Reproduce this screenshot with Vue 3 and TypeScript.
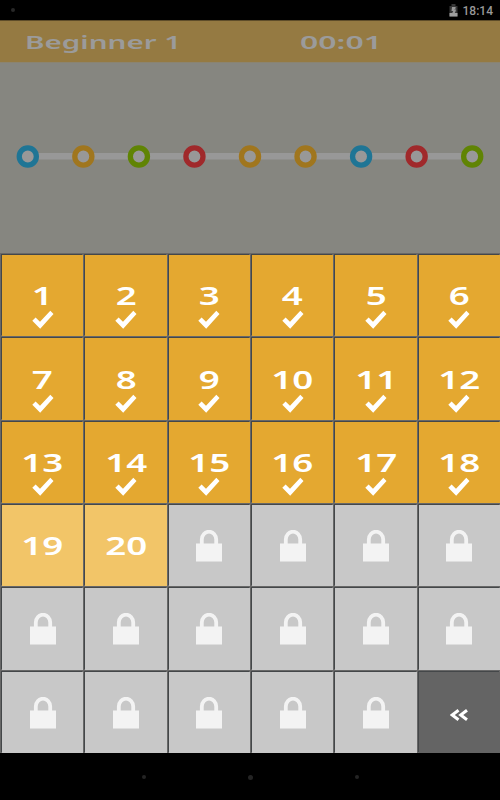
<script setup lang="ts">
type State = 'done' | 'open' | 'locked' | 'back'
interface Cell { id: number; state: State }

const cells: Cell[] = Array.from({ length: 36 }, (_, i) => {
  const id = i + 1
  const state: State = id <= 18 ? 'done' : id <= 20 ? 'open' : id < 36 ? 'locked' : 'back'
  return { id, state }
})

const nodes: string[] = ['blue', 'amber', 'green', 'red', 'amber', 'amber', 'blue', 'red', 'green']
</script>

<template>
  <div class="screen">
    <div class="status">
      <span class="dot"></span>
      <div class="status-right">
        <svg class="battery" width="9" height="13" viewBox="0 0 9 13">
          <path d="M2.500 0h4v2h2v10.500H0.500V2h2z" fill="#363636" />
          <path d="M0.500 9h8v3.500h-8z" fill="#a0a0a0" />
          <path d="M3 3h3.600v1.500L5.200 5.500h1.800L6.500 7.500 5.500 9.500H3L4.200 7H2.500z" fill="#999" />
        </svg>
        <span class="clock">18:14</span>
      </div>
    </div>
    <header class="bar">
      <span class="title">Beginner 1</span>
      <span class="time">00:01</span>
    </header>
    <section class="stage">
      <svg width="500" height="28" viewBox="0 0 500 28">
        <rect x="28" y="10" width="444" height="6.500" fill="#989898" />
        <circle v-for="(n, i) in nodes" :key="i" :class="n" :cx="27.800 + i * 55.550" cy="13.500" r="8.550" />
      </svg>
    </section>
    <main class="grid">
      <div v-for="c in cells" :key="c.id" class="cell" :class="c.state">
        <template v-if="c.state === 'done'">
          <span class="num">{{ c.id }}</span>
          <svg class="check" width="22" height="20" viewBox="0 0 22 20">
            <path d="M0.300 10.800 3.600 7.400 8 11.800 18.300 0.800 21.500 4 8.200 18.700z" fill="#fff" />
          </svg>
        </template>
        <span v-else-if="c.state === 'open'" class="num">{{ c.id }}</span>
        <svg v-else-if="c.state === 'locked'" width="26" height="32" viewBox="0 0 26 32">
          <path d="M5.800 15V9.500a7.200 7.800 0 0 1 14.400 0V15" fill="none" stroke="#f3f3f3" stroke-width="3.800" />
          <rect y="13.500" width="26" height="18" fill="#f3f3f3" />
        </svg>
        <svg v-else width="18" height="12" viewBox="0 0 18 12">
          <path d="M8.500 1.200 2.200 6l6.300 4.800M17 1.200 10.700 6l6.300 4.800" fill="none" stroke="#fff" stroke-width="3" />
        </svg>
      </div>
    </main>
    <footer class="nav">
      <span class="nav-dot"></span>
      <span class="nav-dot big"></span>
      <span class="nav-dot"></span>
    </footer>
  </div>
</template>

<style>
body { background: #000; }
</style>

<style scoped>
.screen {
  width: 500px;
  height: 800px;
  display: flex;
  flex-direction: column;
  overflow: hidden;
  background: #000;
  font-family: "Noto Sans", "Open Sans", sans-serif;
}
.status {
  height: 20px;
  box-sizing: border-box;
  padding: 0 7px 0 11px;
  display: flex;
  align-items: center;
  justify-content: space-between;
}
.dot { width: 4px; height: 4px; border-radius: 50%; background: #282828; }
.status-right { display: flex; align-items: center; gap: 5px; padding-top: 1px; }
.clock { font: 500 12px/18px Roboto, sans-serif; color: #999; }
.bar {
  height: 42px;
  box-sizing: border-box;
  border-top: 1px solid #5f4d29;
  background: #957a42;
  display: grid;
  grid-template-columns: 275px 1fr;
  align-items: center;
  padding: 2px 0 0 25px;
  color: #9b9b9b;
  font-size: 17px;
  font-weight: 600;
  line-height: 24px;
}
.title, .time { justify-self: start; white-space: nowrap; transform-origin: left center; }
.title { transform: scaleX(1.74); }
.time { transform: scaleX(1.88); }
.stage {
  height: 191px;
  box-sizing: border-box;
  padding-top: 80px;
  background: #868680;
  border-top: 1px solid #8b8470;
}
.stage svg { display: block; }
.stage circle { fill: #989898; stroke-width: 5.300; }
.blue { stroke: #1f7595; }
.amber { stroke: #a0761e; }
.green { stroke: #608404; }
.red { stroke: #a0292b; }
.grid {
  display: grid;
  grid-template-columns: 81px 82px 81px 81px 82px 81px;
  grid-template-rows: 81px 82px 81px 81px 82px 81px;
  gap: 2px;
  padding: 2px 0 0 2px;
  background: #686868;
}
.cell {
  box-sizing: border-box;
  display: flex;
  flex-direction: column;
  align-items: center;
  justify-content: center;
  box-shadow: -1px -1px 0 #444749;
}
.cell:nth-child(3n) { padding-right: 1px; }
.done { background: #e4a830; justify-content: flex-start; padding-top: 25px; }
.done:nth-child(n + 7):nth-child(-n + 12) { padding-top: 26px; }
.open { background: #f2c568; padding-bottom: 1px; }
.locked { background: #c8c8c8; }
.back { background: #646464; padding-top: 5px; }
.num {
  color: #fff;
  font-size: 25px;
  font-weight: 600;
  line-height: 30px;
  transform: scaleX(1.47);
}
.check { display: block; }
.nav {
  flex: 1;
  display: flex;
  justify-content: space-between;
  align-items: center;
  padding: 1px 141px 0 142px;
}
.nav-dot { width: 4px; height: 4px; border-radius: 50%; background: #242424; }
.nav-dot.big { width: 5px; height: 5px; }
</style>
